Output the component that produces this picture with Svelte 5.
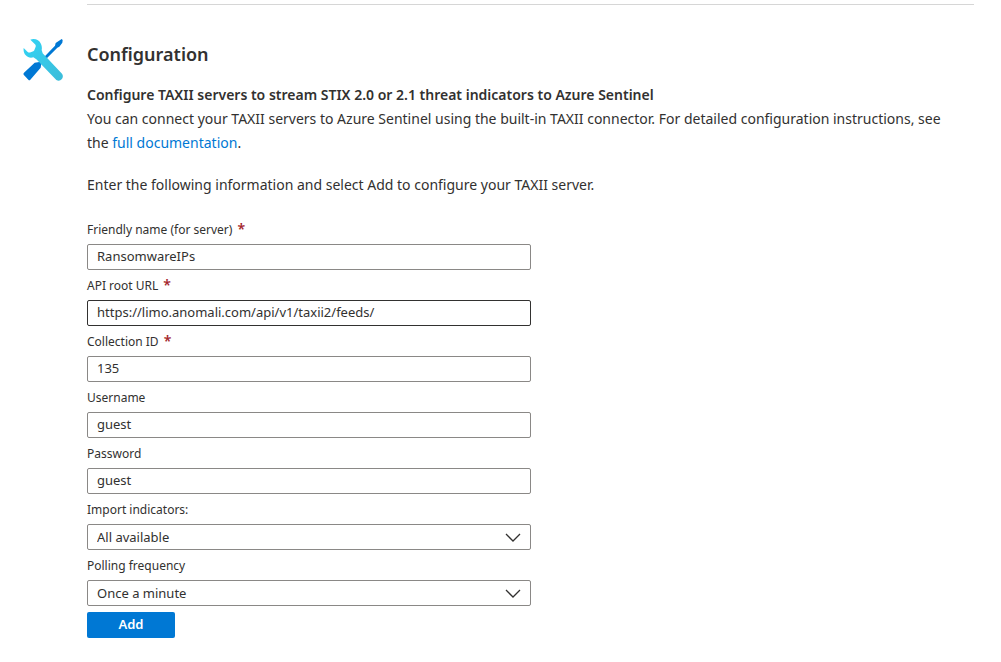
<script>
  const fields = $state([
    { id: 'friendly-name', label: 'Friendly name (for server)', required: true, value: 'RansomwareIPs' },
    { id: 'api-root', label: 'API root URL', required: true, value: 'https://limo.anomali.com/api/v1/taxii2/feeds/', active: true },
    { id: 'collection-id', label: 'Collection ID', required: true, value: '135' },
    { id: 'username', label: 'Username', value: 'guest' },
    { id: 'password', label: 'Password', value: 'guest' }
  ]);
  const selects = [
    { id: 'import-indicators', label: 'Import indicators:', option: 'All available' },
    { id: 'polling-frequency', label: 'Polling frequency', option: 'Once a minute' }
  ];
</script>

<main>
  <svg class="tools" viewBox="36 24 126 132" aria-hidden="true">
    <defs>
      <linearGradient id="wrench" x1="0" y1="0" x2="1" y2="1">
        <stop offset="0" stop-color="#32d4f5" />
        <stop offset="1" stop-color="#3cbcd9" />
      </linearGradient>
    </defs>
    <path fill="#0078d4" d="M155 27 158 30 157 38 148 50 142 53 94 101 92 113 61 149Q58 152 55 149L41 134Q39 131 42 128L74 98 88 96 135 47 137 39Z" />
    <path fill="url(#wrench)" d="M61 29C74 24 88 30 93 42Q97 51 95 60L98 70 156 131C164 142 152 158 139 150L79 88 70 82C54 87 38 74 41 54L53 66Q57 69 62 67L70 64Q73 62 74 58L77 50Q78 46 75 43Z" />
  </svg>

  <section>
    <h1>Configuration</h1>
    <h2>Configure TAXII servers to stream STIX 2.0 or 2.1 threat indicators to Azure Sentinel</h2>
    <p>
      You can connect your TAXII servers to Azure Sentinel using the built-in TAXII connector. For detailed configuration instructions, see the&nbsp;<a href="#documentation">full documentation</a>.
    </p>
    <p class="hint">Enter the following information and select Add to configure your TAXII server.</p>

    <form onsubmit={(e) => e.preventDefault()}>
      {#each fields as field}
        <div class="field">
          <label for={field.id}>{field.label}{#if field.required}<span class="required">*</span>{/if}</label>
          <input id={field.id} type="text" class:active={field.active} bind:value={field.value} />
        </div>
      {/each}
      {#each selects as item}
        <div class="field">
          <label for={item.id}>{item.label}</label>
          <div class="select">
            <select id={item.id}><option>{item.option}</option></select>
            <svg viewBox="0 0 16 10" aria-hidden="true"><path d="M1 1 8 8 15 1" /></svg>
          </div>
        </div>
      {/each}
      <button type="submit">Add</button>
    </form>
  </section>
</main>

<style>
  :global(body) {
    margin: 0;
    background: #fff;
  }
  main {
    display: grid;
    grid-template-columns: 42px minmax(0, 1fr);
    column-gap: 23px;
    padding: 4px 27px 24px 22px;
    font-family: "Segoe UI", "Noto Sans", "Open Sans", sans-serif;
    color: #323130;
  }
  .tools {
    width: 42px;
    height: 44px;
    margin-top: 34px;
  }
  section {
    border-top: 1px solid #d6d6d6;
    padding-top: 37px;
  }
  h1 {
    margin: 0 0 17px;
    font-size: 18px;
    line-height: 24px;
    font-weight: 600;
  }
  h2,
  p {
    margin: 0;
    font-size: 14px;
    line-height: 24px;
  }
  h2 {
    font-weight: 600;
  }
  a {
    color: #0078d4;
    text-decoration: none;
  }
  .hint {
    margin-top: 18px;
  }
  form {
    max-width: 444px;
    margin-top: 19px;
  }
  .field {
    margin-bottom: 2px;
  }
  label {
    display: block;
    font-size: 12px;
    line-height: 28px;
  }
  .required {
    margin-left: 5px;
    color: #a4262c;
    font-size: 14px;
    font-weight: 600;
    line-height: 1;
  }
  input,
  select {
    display: block;
    box-sizing: border-box;
    width: 100%;
    height: 26px;
    margin: 0;
    padding: 0 9px;
    border: 1px solid #8a8886;
    border-radius: 2px;
    background: #fff;
    color: #323130;
    font-family: inherit;
    font-size: 13px;
    outline: none;
  }
  input {
    padding-bottom: 2px;
  }
  select {
    appearance: none;
  }
  input.active,
  input:focus,
  select:focus {
    border-color: #323130;
  }
  .select {
    position: relative;
  }
  .select svg {
    position: absolute;
    top: 9px;
    right: 10px;
    width: 16px;
    height: 10px;
    fill: none;
    stroke: #323130;
    stroke-width: 1.3;
    pointer-events: none;
  }
  button {
    display: block;
    width: 88px;
    height: 26px;
    margin-top: 6px;
    padding: 0 0 2px;
    border: 0;
    border-radius: 2px;
    background: #0078d4;
    color: #fff;
    font-family: inherit;
    font-size: 13px;
    font-weight: 600;
  }
</style>
